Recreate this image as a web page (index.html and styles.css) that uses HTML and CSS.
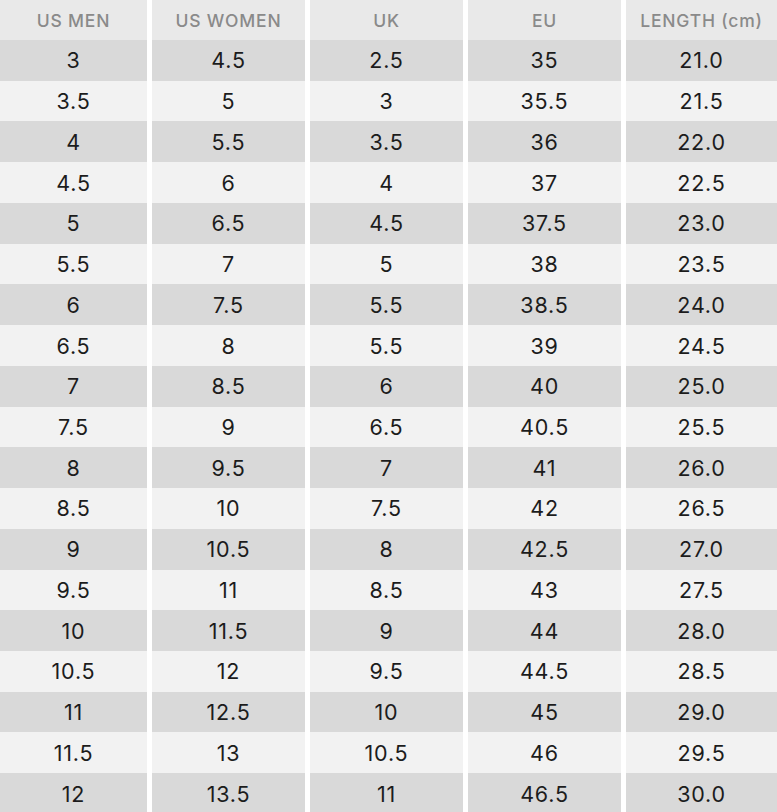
FILE: index.html
```html
<!DOCTYPE html>
<html lang="en">
<head>
<meta charset="utf-8">
<title>Size chart</title>
<link rel="stylesheet" href="styles.css">
</head>
<body>
<div class="chart">
  <div class="head">US MEN</div><div class="head">US WOMEN</div><div class="head">UK</div><div class="head">EU</div><div class="head">LENGTH (cm)</div>
  <div class="cell d">3</div><div class="cell d">4.5</div><div class="cell d">2.5</div><div class="cell d">35</div><div class="cell d">21.0</div>
  <div class="cell l">3.5</div><div class="cell l">5</div><div class="cell l">3</div><div class="cell l">35.5</div><div class="cell l">21.5</div>
  <div class="cell d">4</div><div class="cell d">5.5</div><div class="cell d">3.5</div><div class="cell d">36</div><div class="cell d">22.0</div>
  <div class="cell l">4.5</div><div class="cell l">6</div><div class="cell l">4</div><div class="cell l">37</div><div class="cell l">22.5</div>
  <div class="cell d">5</div><div class="cell d">6.5</div><div class="cell d">4.5</div><div class="cell d">37.5</div><div class="cell d">23.0</div>
  <div class="cell l">5.5</div><div class="cell l">7</div><div class="cell l">5</div><div class="cell l">38</div><div class="cell l">23.5</div>
  <div class="cell d">6</div><div class="cell d">7.5</div><div class="cell d">5.5</div><div class="cell d">38.5</div><div class="cell d">24.0</div>
  <div class="cell l">6.5</div><div class="cell l">8</div><div class="cell l">5.5</div><div class="cell l">39</div><div class="cell l">24.5</div>
  <div class="cell d">7</div><div class="cell d">8.5</div><div class="cell d">6</div><div class="cell d">40</div><div class="cell d">25.0</div>
  <div class="cell l">7.5</div><div class="cell l">9</div><div class="cell l">6.5</div><div class="cell l">40.5</div><div class="cell l">25.5</div>
  <div class="cell d">8</div><div class="cell d">9.5</div><div class="cell d">7</div><div class="cell d">41</div><div class="cell d">26.0</div>
  <div class="cell l">8.5</div><div class="cell l">10</div><div class="cell l">7.5</div><div class="cell l">42</div><div class="cell l">26.5</div>
  <div class="cell d">9</div><div class="cell d">10.5</div><div class="cell d">8</div><div class="cell d">42.5</div><div class="cell d">27.0</div>
  <div class="cell l">9.5</div><div class="cell l">11</div><div class="cell l">8.5</div><div class="cell l">43</div><div class="cell l">27.5</div>
  <div class="cell d">10</div><div class="cell d">11.5</div><div class="cell d">9</div><div class="cell d">44</div><div class="cell d">28.0</div>
  <div class="cell l">10.5</div><div class="cell l">12</div><div class="cell l">9.5</div><div class="cell l">44.5</div><div class="cell l">28.5</div>
  <div class="cell d">11</div><div class="cell d">12.5</div><div class="cell d">10</div><div class="cell d">45</div><div class="cell d">29.0</div>
  <div class="cell l">11.5</div><div class="cell l">13</div><div class="cell l">10.5</div><div class="cell l">46</div><div class="cell l">29.5</div>
  <div class="cell d">12</div><div class="cell d">13.5</div><div class="cell d">11</div><div class="cell d">46.5</div><div class="cell d">30.0</div>
</div>
</body>
</html>
```
FILE: styles.css
```css
html, body {
  margin: 0;
  padding: 0;
  background: #ffffff;
}
body {
  font-family: Inter, "Open Sans", sans-serif;
  overflow: hidden;
}
.chart {
  display: grid;
  grid-template-columns: 147px 153px 153px 153px 151px;
  grid-template-rows: 40px;
  grid-auto-rows: 40.74px;
  column-gap: 5px;
  width: 777px;
}
.head {
  background: #e9e9e9;
  color: #8a8a8a;
  font-size: 17.5px;
  font-weight: 500;
  letter-spacing: 0.8px;
  display: flex;
  align-items: center;
  justify-content: center;
}
.cell {
  color: #1c1c1c;
  font-size: 21.5px;
  letter-spacing: 0.8px;
  display: flex;
  align-items: center;
  justify-content: center;
}
.d { background: #d9d9d9; }
.l { background: #f2f2f2; }
```
